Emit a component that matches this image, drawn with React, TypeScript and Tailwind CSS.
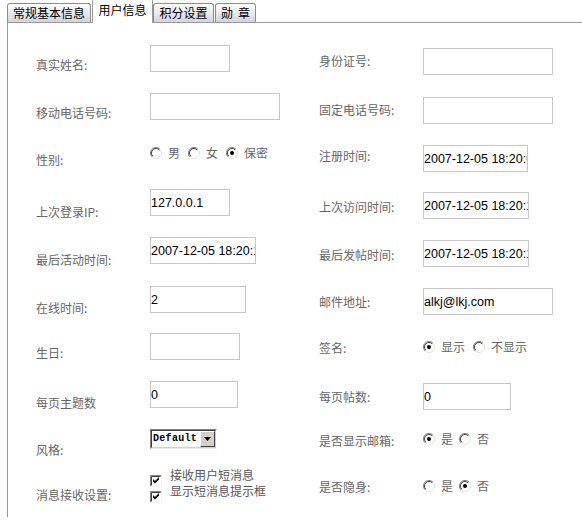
import React from 'react';

const cjk = "font-['Noto_Sans_CJK_SC','Liberation_Sans',sans-serif]";

const Radio = ({ checked = false }: { checked?: boolean }) => (
  <svg width="12" height="12" viewBox="0 0 12 12" className="shrink-0">
    <circle cx="6" cy="6" r="5.5" fill="#fff" stroke="#e4e1da" />
    <path d="M2.1 9.9 A5.5 5.5 0 0 1 9.9 2.1" fill="none" stroke="#808080" />
    <path d="M2.8 9.2 A4.5 4.5 0 0 1 9.2 2.8" fill="none" stroke="#404040" />
    {checked && <circle cx="6" cy="6" r="2" fill="#000" />}
  </svg>
);

const Check = () => (
  <svg width="12" height="12" viewBox="0 0 12 12" className="shrink-0">
    <rect x="0" y="0" width="12" height="12" fill="#fff" />
    <path d="M0.5 11.5 V0.5 H11.5" fill="none" stroke="#808080" />
    <path d="M1.5 10.5 V1.5 H10.5" fill="none" stroke="#404040" />
    <path d="M11.5 0.5 V11.5 H0.5" fill="none" stroke="#f0f0f0" />
    <path d="M3 4 V6.5 L5 8.5 L9 4.5 V2 L5 6 Z" fill="#000" />
  </svg>
);

const Field = ({ w, value = '' }: { w: string; value?: string }) => (
  <input
    defaultValue={value}
    className={`${w} h-[27px] border border-[#c6c6c6] bg-white p-0 text-[12.5px] text-black outline-none font-['Liberation_Sans',Arial,sans-serif]`}
  />
);

const Opt = ({ checked, label }: { checked?: boolean; label: string }) => (
  <span className="flex items-center gap-[6px] mr-[6px]">
    <Radio checked={checked} />
    <span className="leading-[14px]">{label}</span>
  </span>
);

export default function App() {
  return (
    <div className={`w-[582px] h-[524px] overflow-hidden bg-white text-[12px] ${cjk}`}>
      {/* tabs */}
      <div className="flex items-end h-[22px] pl-[7px]">
        <div className="flex items-center justify-center w-[84px] h-[19px] mr-[1px] border border-b-0 border-[#8c8c8c] rounded-t-[3px] bg-gradient-to-b from-white to-[#d3d3de] text-black">
          常规基本信息
        </div>
        <div className="relative z-10 flex items-center justify-center w-[61px] h-[23px] -mb-px pb-[3px] border-x border-[#999] bg-white text-black">
          用户信息
        </div>
        <div className="flex items-center justify-center w-[61px] h-[19px] mr-[1px] border border-b-0 border-[#8c8c8c] rounded-t-[3px] bg-gradient-to-b from-white to-[#d3d3de] text-black">
          积分设置
        </div>
        <div className="flex items-center justify-center gap-[5px] w-[41px] h-[19px] border border-b-0 border-[#8c8c8c] rounded-t-[3px] bg-gradient-to-b from-white to-[#d3d3de] text-black">
          <span>勋</span>
          <span>章</span>
        </div>
      </div>

      {/* panel */}
      <div className="ml-[7px] h-[495px] border-l border-t border-[#999] flex pl-[28px] text-[#666]">
        {/* left column */}
        <div className="w-[283px] flex flex-col">
          <div className="flex items-start mt-[22px]">
            <span className="w-[114px] pt-[13px] leading-[14px]">真实姓名:</span>
            <Field w="w-[80px]" />
          </div>
          <div className="flex items-start mt-[21px]">
            <span className="w-[114px] pt-[13px] leading-[14px]">移动电话号码:</span>
            <Field w="w-[130px]" />
          </div>
          <div className="flex items-start mt-[26px]">
            <span className="w-[114px] pt-[7px] leading-[14px]">性别:</span>
            <div className="flex items-center h-[14px] gap-[2px]">
              <Opt label="男" />
              <Opt label="女" />
              <Opt checked label="保密" />
            </div>
          </div>
          <div className="flex items-start mt-[22px]">
            <span className="w-[114px] pt-[16px] leading-[14px]">上次登录IP:</span>
            <Field w="w-[80px]" value="127.0.0.1" />
          </div>
          <div className="flex items-start mt-[18px]">
            <span className="w-[114px] pt-[16px] leading-[14px]">最后活动时间:</span>
            <Field w="w-[106px]" value="2007-12-05 18:20:15" />
          </div>
          <div className="flex items-start mt-[19px]">
            <span className="w-[114px] pt-[15px] leading-[14px]">在线时间:</span>
            <Field w="w-[96px]" value="2" />
          </div>
          <div className="flex items-start mt-[18px]">
            <span className="w-[114px] pt-[13px] leading-[14px]">生日:</span>
            <Field w="w-[90px]" />
          </div>
          <div className="flex items-start mt-[21px]">
            <span className="w-[114px] pt-[15px] leading-[14px]">每页主题数</span>
            <Field w="w-[88px]" value="0" />
          </div>
          <div className="flex items-start mt-[19px]">
            <span className="w-[114px] pt-[14px] leading-[14px]">风格:</span>
            <div className="flex w-[67px] h-[20px] border border-t-[#808080] border-l-[#808080] border-r-white border-b-[#e8e8e8]">
              <div className="flex flex-1 items-center bg-white border border-t-[#404040] border-l-[#404040] border-r-[#d4d0c8] border-b-[#d4d0c8]">
                <span className="flex-1 pl-[1px] text-[10px] font-bold text-black leading-[12px] tracking-[0.3px] font-['Liberation_Mono','Courier_New',monospace]">
                  Default
                </span>
                <div className="flex items-center justify-center w-[15px] h-[16px] bg-[#d4d0c8] border border-t-white border-l-white border-r-[#404040] border-b-[#404040]">
                  <svg width="7" height="4" viewBox="0 0 7 4">
                    <path d="M0 0 H7 L3.5 4 Z" fill="#000" />
                  </svg>
                </div>
              </div>
            </div>
          </div>
          <div className="flex items-start mt-[10px]">
            <span className="w-[114px] pt-[21px] leading-[14px]">消息接收设置:</span>
            <div className="flex flex-col text-[#555]">
              <div className="flex items-start h-[16px] gap-[8px]">
                <span className="mt-[8px]"><Check /></span>
                <span className="leading-[16px]">接收用户短消息</span>
              </div>
              <div className="flex items-start h-[16px] gap-[8px]">
                <span className="mt-[8px]"><Check /></span>
                <span className="leading-[16px]">显示短消息提示框</span>
              </div>
            </div>
          </div>
        </div>

        {/* right column */}
        <div className="flex-1 flex flex-col">
          <div className="flex items-start mt-[25px]">
            <span className="w-[104px] pt-[6px] leading-[14px]">身份证号:</span>
            <Field w="w-[130px]" />
          </div>
          <div className="flex items-start mt-[22px]">
            <span className="w-[104px] pt-[6px] leading-[14px]">固定电话号码:</span>
            <Field w="w-[130px]" />
          </div>
          <div className="flex items-start mt-[21px]">
            <span className="w-[104px] pt-[4px] leading-[14px]">注册时间:</span>
            <Field w="w-[105px]" value="2007-12-05 18:20:05" />
          </div>
          <div className="flex items-start mt-[20px]">
            <span className="w-[104px] pt-[8px] leading-[14px]">上次访问时间:</span>
            <Field w="w-[106px]" value="2007-12-05 18:20:15" />
          </div>
          <div className="flex items-start mt-[21px]">
            <span className="w-[104px] pt-[8px] leading-[14px]">最后发帖时间:</span>
            <Field w="w-[106px]" value="2007-12-05 18:20:15" />
          </div>
          <div className="flex items-start mt-[21px]">
            <span className="w-[104px] pt-[7px] leading-[14px]">邮件地址:</span>
            <Field w="w-[130px]" value="alkj@lkj.com" />
          </div>
          <div className="flex items-start mt-[25px]">
            <span className="w-[104px] pt-[1px] leading-[14px]">签名:</span>
            <div className="flex items-center h-[14px] gap-[2px]">
              <Opt checked label="显示" />
              <Opt label="不显示" />
            </div>
          </div>
          <div className="flex items-start mt-[28px]">
            <span className="w-[104px] pt-[7px] leading-[14px]">每页帖数:</span>
            <Field w="w-[88px]" value="0" />
          </div>
          <div className="flex items-start mt-[22px]">
            <span className="w-[104px] pt-[2px] leading-[14px]">是否显示邮箱:</span>
            <div className="flex items-center h-[14px]">
              <Opt checked label="是" />
              <Opt label="否" />
            </div>
          </div>
          <div className="flex items-start mt-[31px]">
            <span className="w-[104px] pt-[1px] leading-[14px]">是否隐身:</span>
            <div className="flex items-center h-[14px]">
              <Opt label="是" />
              <Opt checked label="否" />
            </div>
          </div>
        </div>
      </div>
    </div>
  );
}
